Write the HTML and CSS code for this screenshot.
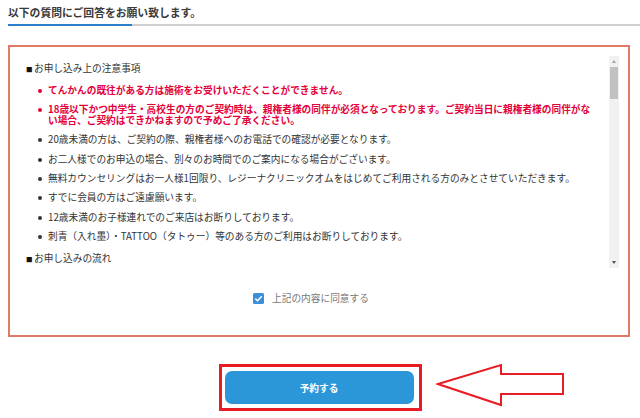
FILE: index.html
```html
<!DOCTYPE html>
<html lang="ja">

<head>
  <meta charset="UTF-8">
  <meta name="viewport" content="width=device-width, initial-scale=1.0">
  <title>ご予約 - 同意事項</title>
  <link rel="stylesheet" href="styles.css">
</head>

<body>
  <div class="page">
    <h2 class="title">以下の質問にご回答をお願い致します。</h2>
    <div class="rule">
      <div class="rule-blue"></div>
      <div class="rule-gray"></div>
    </div>

    <div class="agree-box">
      <div class="scroll-area">
        <div class="notes">
          <p class="notes-head"><span class="sq">■</span>お申し込み上の注意事項</p>
          <ul class="notes-list">
            <li class="red">てんかんの既往がある方は施術をお受けいただくことができません。</li>
            <li class="red">18歳以下かつ中学生・高校生の方のご契約時は、親権者様の同伴が必須となっております。ご契約当日に親権者様の同伴がない場合、ご契約はできかねますので予めご了承ください。</li>
            <li>20歳未満の方は、ご契約の際、親権者様へのお電話での確認が必要となります。</li>
            <li>お二人様でのお申込の場合、別々のお時間でのご案内になる場合がございます。</li>
            <li>無料カウンセリングはお一人様1回限り、レジーナクリニックオムをはじめてご利用される方のみとさせていただきます。</li>
            <li>すでに会員の方はご遠慮願います。</li>
            <li>12歳未満のお子様連れでのご来店はお断りしております。</li>
            <li>刺青（入れ墨）・TATTOO（タトゥー）等のある方のご利用はお断りしております。</li>
          </ul>
          <p class="notes-head"><span class="sq">■</span>お申し込みの流れ</p>
        </div>
        <div class="scrollbar">
          <div class="sb-btn"><span class="tri-up"></span></div>
          <div class="sb-thumb"></div>
          <div class="sb-track"></div>
          <div class="sb-btn"><span class="tri-down"></span></div>
        </div>
      </div>

      <label class="agree">
        <svg class="check" width="11" height="11" viewBox="0 0 11 11">
          <rect x="0" y="0" width="11" height="11" rx="1.5" fill="#3b8fd8"/>
          <path d="M2.3 5.6 L4.5 7.7 L8.8 3.3" fill="none" stroke="#fff" stroke-width="1.5"/>
        </svg>
        上記の内容に同意する
      </label>
    </div>

    <div class="cta">
      <div class="cta-mark">
        <button class="btn-reserve">予約する</button>
      </div>
      <svg class="arrow" width="130" height="44" viewBox="0 0 130 44">
        <polygon points="2,21 65,2 65,11 127,11 127,31 65,31 65,42" fill="none" stroke="#e81c24" stroke-width="2"/>
      </svg>
    </div>
  </div>
</body>

</html>
```

FILE: styles.css
```css
* {
  margin: 0;
  padding: 0;
  box-sizing: border-box;
  list-style: none;
}

body {
  font-family: "Noto Sans CJK JP", "Noto Sans", sans-serif;
  color: #333;
  background: #fff;
}

.page {
  width: 640px;
}

.title {
  margin-left: 8px;
  padding-top: 6px;
  font-size: 10.8px;
  line-height: 13px;
  font-weight: bold;
  color: #3a3a3a;
}

.rule {
  display: flex;
  margin: 5px 0 0 8px;
  height: 2px;
}
.rule-blue {
  width: 124px;
  background: #2a7fc9;
}
.rule-gray {
  flex: 1;
  background: #d0d0d0;
}

.agree-box {
  margin: 19px 10px 0 8px;
  height: 292px;
  border: 2px solid #e07a66;
  padding: 9px 9px 0 12px;
}

.scroll-area {
  display: flex;
  height: 212px;
}

.notes {
  flex: 1;
  overflow: hidden;
  padding: 6.5px 12px 0 4px;
  font-size: 9.7px;
  line-height: 11px;
  color: #333;
}

.sq {
  font-size: 6.5px;
  margin-right: 1.5px;
  color: #111;
}

.notes-list {
  display: flex;
  flex-direction: column;
  gap: 8.4px;
  margin: 10px 0 11px;
}
.notes-list li {
  display: flex;
  padding-left: 12px;
}
.notes-list li::before {
  content: "";
  flex: none;
  width: 4px;
  height: 4px;
  border-radius: 50%;
  background: currentColor;
  margin: 4px 6px 0 0;
}
.notes-list .red {
  color: #e4003a;
  font-weight: bold;
}

.scrollbar {
  width: 10px;
  background: #f1f1f1;
  display: flex;
  flex-direction: column;
}
.sb-btn {
  height: 11px;
  display: flex;
  align-items: center;
  justify-content: center;
}
.tri-up {
  border-left: 2.5px solid transparent;
  border-right: 2.5px solid transparent;
  border-bottom: 3px solid #a3a3a3;
}
.tri-down {
  border-left: 2.5px solid transparent;
  border-right: 2.5px solid transparent;
  border-top: 3px solid #505050;
}
.sb-thumb {
  height: 32px;
  margin: 0 1px;
  background: #c1c1c1;
}
.sb-track {
  flex: 1;
}

.agree {
  display: flex;
  align-items: center;
  justify-content: center;
  gap: 8px;
  margin-top: 25px;
  padding-right: 19px;
  font-size: 9.7px;
  line-height: 11px;
  color: #777;
}

.cta {
  position: relative;
  display: flex;
  justify-content: center;
  margin-top: 27px;
}
.cta-mark {
  border: 3px solid #e81c24;
  padding: 4px 5px 4px 3px;
}
.btn-reserve {
  display: block;
  width: 189px;
  height: 33px;
  border: none;
  border-radius: 7px;
  background: #2b97d8;
  color: #fff;
  font-family: "Noto Sans CJK JP", sans-serif;
  font-size: 9.7px;
  font-weight: bold;
  cursor: pointer;
}

.arrow {
  position: absolute;
  left: 436px;
  top: -1px;
}
```
